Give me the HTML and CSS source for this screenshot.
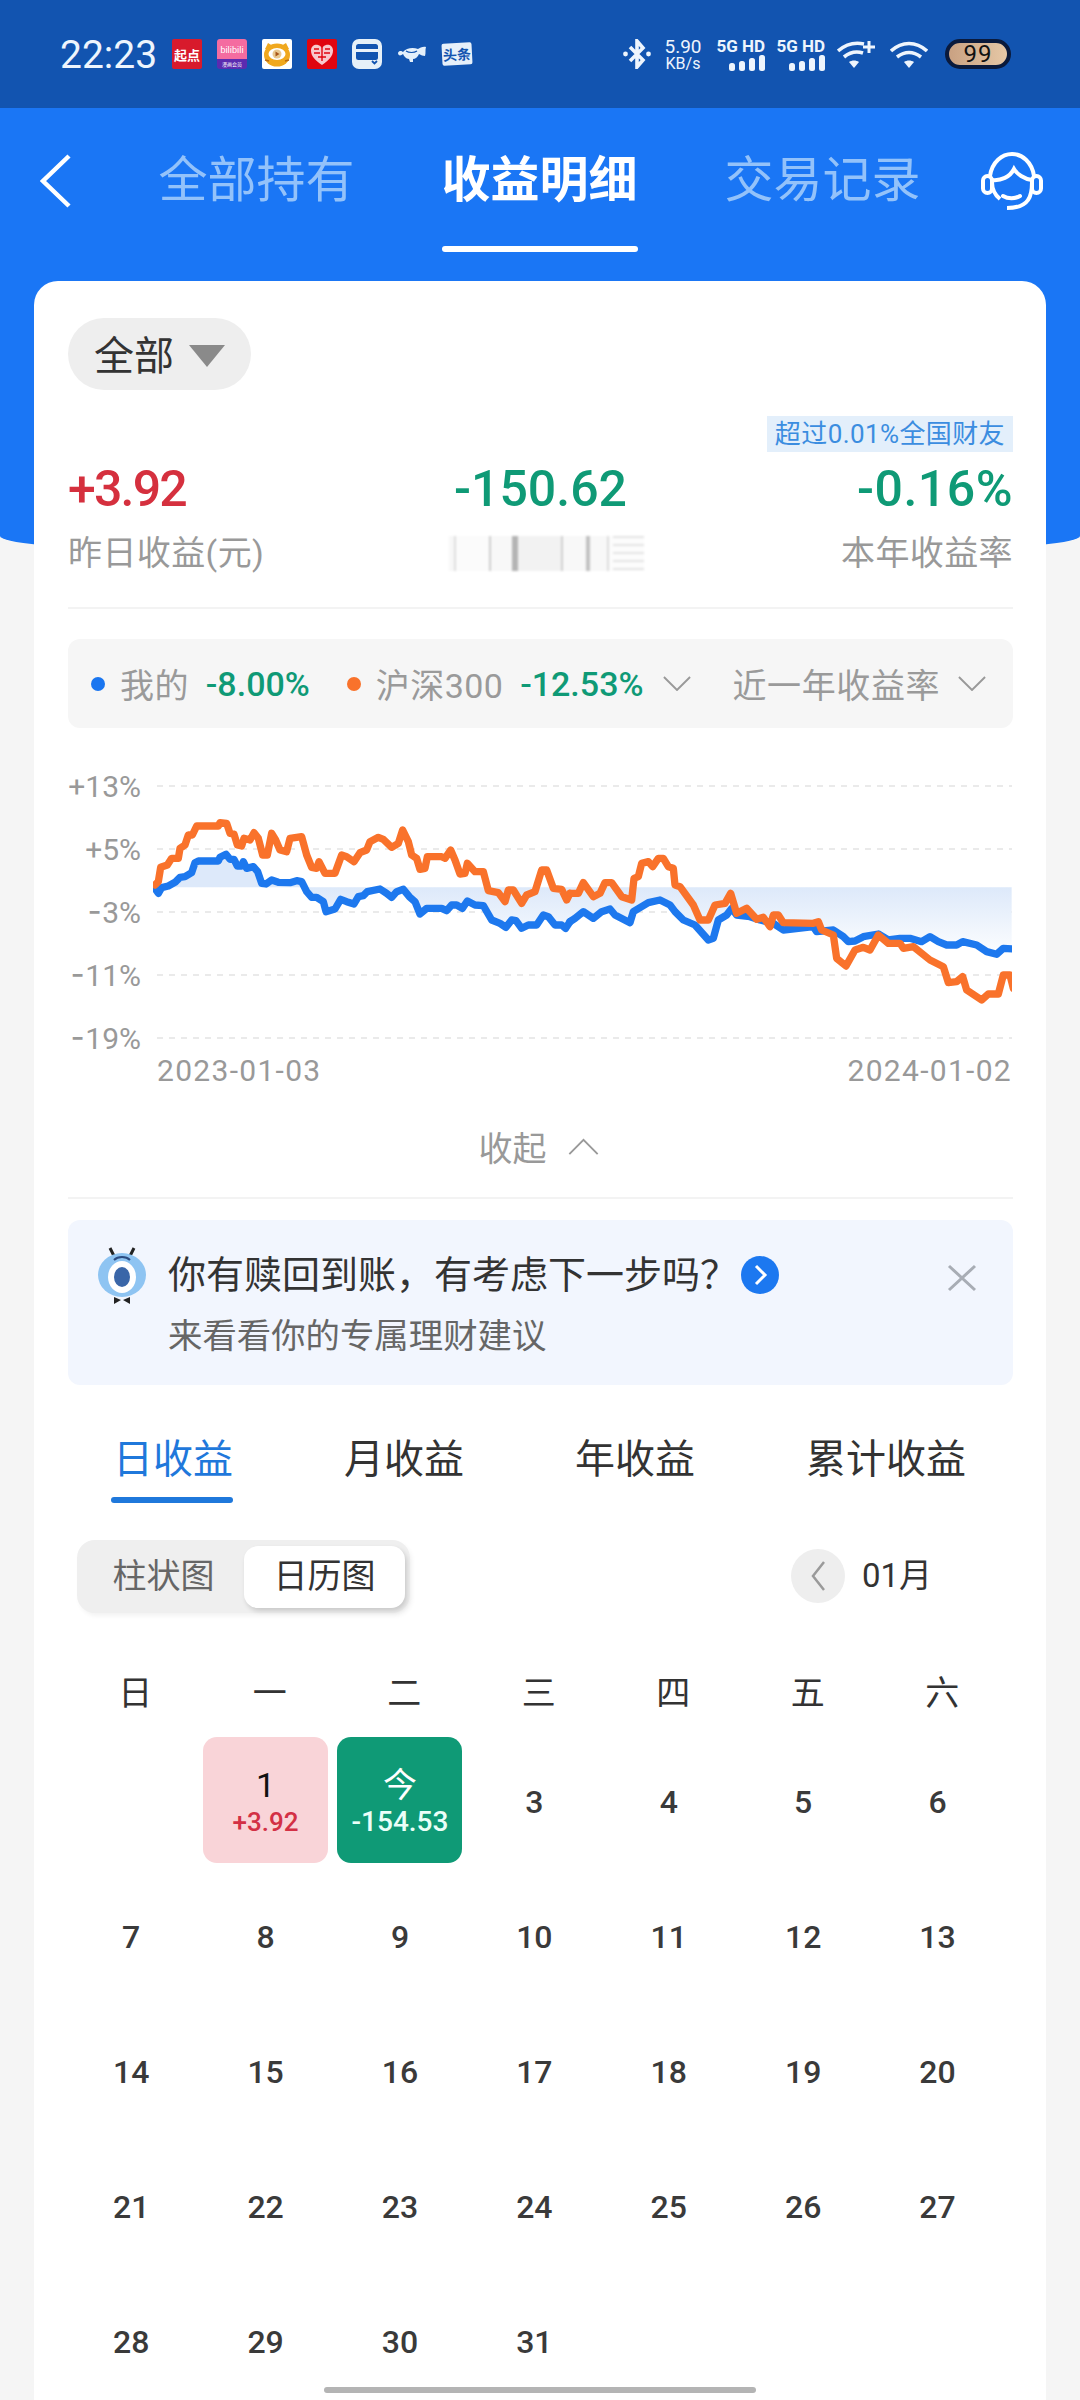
FILE: index.html
```html
<!DOCTYPE html>
<html lang="zh-CN">
<head>
<meta charset="utf-8">
<title>收益明细</title>
<link rel="stylesheet" href="styles.css">
</head>
<body>
<div class="page">
  <div class="hero-bg"></div>

  <div class="status">
    <span class="time">22:23</span>
    <div class="apps">
      <span class="app app-qd">起点</span>
      <span class="app app-bili"><b>bilibili</b><i>漫画会员</i></span>
      <span class="app app-tiger"><svg viewBox="0 0 30 30"><path d="M3 10l3-6 5 3h8l5-3 3 6z" fill="#f0a81e"/><ellipse cx="15" cy="16" rx="13" ry="11.500" fill="#f0a81e"/><ellipse cx="15" cy="15" rx="8.500" ry="6" fill="#fff"/><circle cx="15" cy="15" r="4.500" fill="#e8c890"/><path d="M13.500 12.500l4 2.500-4 2.500z" fill="#a8561a"/><path d="M3 21l4 1M27 21l-4 1" stroke="#b86a14" stroke-width="1.500"/></svg></span>
      <span class="app app-heart"><svg viewBox="0 0 30 30"><path d="M15 26C8 21 4 17 4 11.500C4 7 8 5 11 6c2 .6 3 1.500 4 3 1-1.500 2-2.400 4-3 3-1 7 1 7 5.500C26 17 22 21 15 26z" fill="#f8c8cc"/><path d="M7 10h5M7 14h6M18 10h5M17 14h6M11 18h8M15 8v14" stroke="#e0050f" stroke-width="1.400"/></svg></span>
      <span class="app app-card"><svg viewBox="0 0 30 30"><rect x="4" y="5" width="22" height="16" rx="2.500" fill="#1254b0"/><rect x="4" y="10" width="22" height="3" fill="#eaf2fa"/><path d="M20 22l2.500 2.500L25 22" fill="none" stroke="#1254b0" stroke-width="1.800"/></svg></span>
      <span class="app app-plain"><svg viewBox="0 0 30 30"><path d="M1 14c1-3 4-2 5-1 3-4 10-5 15-3 2-1 5-3 8-2-1 3 0 6-1 9-2 0-4-1-6-2-1 3-4 5-6 5l0 3h-3l-1-3c-3 0-5-3-6-5-2 2-5 2-5-1z" fill="#e4f0fb"/><path d="M9 12c3 2 8 2 11 0" stroke="#1254b0" stroke-width="1.200" fill="none"/></svg></span>
      <span class="app app-tt">头条</span>
    </div>
    <div class="sys">
      <svg class="i-bt" viewBox="0 0 28 30"><path d="M7 8l13 13-6 7V2l6 7L7 22" fill="none" stroke="#eef5fd" stroke-width="3.600"/><circle cx="2.500" cy="15" r="2.400" fill="#eef5fd"/><circle cx="25.500" cy="15" r="2.400" fill="#eef5fd"/></svg>
      <div class="speed"><span class="sp1">5.90</span><span class="sp2">KB/s</span></div>
      <div class="sig"><span class="sig-t">5G HD</span><svg viewBox="0 0 36 16"><rect x="0" y="8" width="6" height="8" rx="2.500"/><rect x="10" y="6" width="6" height="10" rx="2.500"/><rect x="20" y="3" width="6" height="13" rx="2.500"/><rect x="30" y="0" width="6" height="16" rx="2.500"/></svg></div>
      <div class="sig sig2"><span class="sig-t">5G HD</span><svg viewBox="0 0 36 16"><rect x="0" y="8" width="6" height="8" rx="2.500"/><rect x="10" y="6" width="6" height="10" rx="2.500"/><rect x="20" y="3" width="6" height="13" rx="2.500"/><rect x="30" y="0" width="6" height="16" rx="2.500"/></svg></div>
      <svg class="i-wifi1" viewBox="0 0 38 30"><g fill="none" stroke="#eef5fd" stroke-width="3.600"><path d="M1 12c8-7 17-9 26-7"/><path d="M7 18c6-5 13-6 19-4"/></g><path d="M12 23c3-2 7-2 10 0l-5 6z" fill="#eef5fd"/><path d="M26 8h12M32 2v12" stroke="#eef5fd" stroke-width="3"/></svg>
      <svg class="i-wifi2" viewBox="0 0 38 30"><g fill="none" stroke="#eef5fd" stroke-width="3.600"><path d="M1 12c11-10 25-10 36 0"/><path d="M7 18c8-6 16-6 24 0"/></g><path d="M14 23c3-2 7-2 10 0l-5 6z" fill="#eef5fd"/></svg>
      <div class="battery"><span>99</span></div>
    </div>
  </div>

  <div class="nav">
    <svg class="back" viewBox="0 0 32 54"><path d="M29 2L3 27l26 25" fill="none" stroke="#fff" stroke-width="4.500"/></svg>
    <div class="nav-tabs">
      <span class="nav-tab">全部持有</span>
      <span class="nav-tab nav-on">收益明细</span>
      <span class="nav-tab">交易记录</span>
    </div>
    <svg class="headset" viewBox="0 0 62 58"><g fill="none" stroke="#fff" stroke-width="4"><path d="M9 24C11 10 21 2 31 2s20 8 22 22"/><path d="M11 28c9 1 18-3 22-11 3 5 10 10 18 11"/><rect x="2" y="24" width="9" height="17" rx="4.500"/><rect x="51" y="24" width="9" height="17" rx="4.500"/><path d="M11 30c0 8 3 13 8 17"/><path d="M51 30c0 8-1 14-4 18-4 6-12 8-21 8"/><path d="M22 44c5 3 12 3 17 0" stroke-linecap="round"/></g></svg>
  </div>

  <div class="card">
    <div class="pill"><span>全部</span><i class="tri"></i></div>
    <div class="rank-row"><span class="rank">超过0.01%全国财友</span></div>
    <div class="nums">
      <span class="num up">+3.92</span>
      <span class="num down mid">-150.62</span>
      <span class="num down end">-0.16%</span>
    </div>
    <div class="labels">
      <span class="lab">昨日收益(元)</span>
      <span class="blur"></span>
      <span class="lab end">本年收益率</span>
    </div>
    <div class="rule r1"></div>

    <div class="legend">
      <i class="dot d-blue"></i><span class="lg-name">我的</span><span class="lg-val">-8.00%</span>
      <i class="dot d-orange"></i><span class="lg-name">沪深300</span><span class="lg-val">-12.53%</span>
      <svg class="chev c1" viewBox="0 0 30 16"><path d="M1 1l14 14L29 1" fill="none" stroke="#999" stroke-width="2"/></svg>
      <span class="lg-name lg-range">近一年收益率</span>
      <svg class="chev c2" viewBox="0 0 30 16"><path d="M1 1l14 14L29 1" fill="none" stroke="#999" stroke-width="2"/></svg>
    </div>

    <svg class="chart" viewBox="68 760 945 330">
      <defs>
        <linearGradient id="fade" gradientUnits="userSpaceOnUse" x1="0" y1="382" x2="0" y2="600">
          <stop offset="0" stop-color="#dde9fa"/>
          <stop offset="1" stop-color="#ffffff"/>
        </linearGradient>
        <clipPath id="plot"><rect x="153" y="770" width="859" height="280"/></clipPath>
      </defs>
      <g class="grid">
        <line x1="157" x2="1012" y1="786" y2="786"/>
        <line x1="157" x2="1012" y1="849" y2="849"/>
        <line x1="157" x2="1012" y1="912" y2="912"/>
        <line x1="157" x2="1012" y1="975" y2="975"/>
        <line x1="157" x2="1012" y1="1038" y2="1038"/>
      </g>
      <g class="axis">
        <text x="141" y="797">+13%</text>
        <text x="141" y="860">+5%</text>
        <text x="141" y="923"><tspan class="neg">-</tspan>3%</text>
        <text x="141" y="986"><tspan class="neg">-</tspan>11%</text>
        <text x="141" y="1049"><tspan class="neg">-</tspan>19%</text>
      </g>
      <g clip-path="url(#plot)">
        <g transform="translate(130 760) scale(.33333)">
          <polygon fill="url(#fade)" points="75,382 95,383 115,378 135,367 150,352 165,350 185,338 195,308 205,303 265,303 270,292 288,283 300,298 312,298 322,318 335,318 340,305 350,325 370,320 383,335 395,370 408,372 425,360 445,367 480,368 500,362 515,365 530,395 545,412 560,412 580,425 588,455 615,447 632,418 650,425 672,432 685,410 700,407 712,395 750,387 770,400 785,412 800,395 820,388 838,410 855,425 870,462 890,445 935,445 950,452 965,435 980,435 997,445 1012,423 1035,435 1060,437 1085,480 1110,490 1128,502 1145,480 1158,482 1175,505 1195,495 1220,495 1240,465 1255,470 1275,495 1295,495 1307,505 1320,485 1320,382"/>
        </g>
        <g transform="translate(560 760) scale(.33333)">
          <polygon fill="url(#fade)" points="30,382 30,485 45,475 70,455 100,475 125,455 150,447 165,465 210,488 220,455 265,428 300,420 330,435 345,455 370,480 405,495 445,540 460,535 475,480 500,465 515,445 530,465 570,470 600,480 640,490 670,510 760,500 770,515 820,510 850,530 865,545 885,543 910,530 955,522 985,540 1020,535 1050,535 1085,545 1110,530 1135,545 1160,555 1190,555 1208,545 1250,555 1280,575 1310,583 1330,565 1355,567 1355,382"/>
        </g>
        <g transform="translate(130 760) scale(.33333)">
          <polyline class="ln-blue" points="75,385 85,400 95,383 115,378 135,367 150,352 165,350 185,338 195,308 205,303 265,303 270,292 288,283 300,298 312,298 322,318 335,318 340,305 350,325 370,320 383,335 395,370 408,372 425,360 445,367 480,368 500,362 515,365 530,395 545,412 560,412 580,425 588,455 615,447 632,418 650,425 672,432 685,410 700,407 712,395 750,387 770,400 785,412 800,395 820,388 838,410 855,425 870,462 890,445 935,445 950,452 965,435 980,435 997,445 1012,423 1035,435 1060,437 1085,480 1110,490 1128,502 1145,480 1158,482 1175,505 1195,495 1220,495 1240,465 1255,470 1275,495 1295,495 1307,505 1320,485"/>
        </g>
        <g transform="translate(560 760) scale(.33333)">
          <polyline class="ln-blue" points="30,485 45,475 70,455 100,475 125,455 150,447 165,465 210,488 220,455 265,428 300,420 330,435 345,455 370,480 405,495 445,540 460,535 475,480 500,465 515,445 530,465 570,470 600,480 640,490 670,510 760,500 770,515 820,510 850,530 865,545 885,543 910,530 955,522 985,540 1020,535 1050,535 1085,545 1110,530 1135,545 1160,555 1190,555 1208,545 1250,555 1280,575 1310,583 1330,565 1365,567"/>
        </g>
        <g transform="translate(130 760) scale(.33333)">
          <polyline class="ln-orange" points="75,375 85,365 92,322 112,315 125,295 145,295 150,265 165,255 175,225 187,225 200,198 265,198 270,188 290,190 300,220 312,222 322,255 335,258 342,235 360,240 372,218 385,235 398,285 412,285 425,220 437,240 450,270 470,275 480,235 515,230 530,285 545,322 560,325 567,305 585,340 615,340 635,285 650,290 672,305 690,278 710,270 720,245 745,232 760,238 785,262 805,250 818,210 835,245 845,285 860,295 870,328 885,325 892,290 935,290 945,295 962,270 975,300 990,342 1005,340 1012,310 1035,335 1060,335 1075,392 1105,398 1125,425 1135,390 1150,390 1175,430 1190,405 1215,395 1235,330 1250,330 1270,385 1295,388 1310,420 1320,400"/>
        </g>
        <g transform="translate(560 760) scale(.33333)">
          <polyline class="ln-orange" points="30,400 55,400 70,368 100,410 120,400 135,368 155,368 185,410 215,420 222,355 235,350 245,310 265,305 278,320 295,295 310,295 325,320 340,325 345,375 360,380 400,435 420,480 445,480 465,435 495,430 512,400 530,460 560,445 590,478 610,472 630,500 640,465 655,465 670,488 760,490 775,485 785,510 820,525 830,595 858,618 885,570 910,562 930,570 955,525 985,550 1020,550 1030,565 1060,560 1110,600 1150,620 1165,668 1190,665 1208,650 1220,690 1265,720 1285,702 1315,702 1330,645 1350,645 1360,685"/>
        </g>
      </g>
      <g class="dates">
        <text x="157" y="1081">2023-01-03</text>
        <text class="date-end" x="1012" y="1081">2024-01-02</text>
      </g>
    </svg>

    <div class="collapse"><span>收起</span><svg viewBox="0 0 32 18"><path d="M1 17L16 2l15 15" fill="none" stroke="#999" stroke-width="2"/></svg></div>

    <div class="banner">
      <svg class="mascot" viewBox="0 0 50 58"><path d="M17 9L13 1M33 9l4-8" stroke="#222" stroke-width="3"/><ellipse cx="25" cy="28" rx="24" ry="22" fill="#8ec4f2"/><ellipse cx="25" cy="30" rx="14" ry="16" fill="#fff"/><ellipse cx="25" cy="30" rx="8" ry="10" fill="#3a66a8"/><path d="M17 13c4-4 12-4 16 0" stroke="#2a4a80" stroke-width="2" fill="none"/><path d="M17 50l7 3-7 4zM33 50l-7 3 7 4z" fill="#222"/></svg>
      <div class="banner-text">
        <div class="b-line1"><span>你有赎回到账，有考虑下一步吗？</span><svg class="go" viewBox="0 0 38 38"><circle cx="19" cy="19" r="19" fill="#1c78f0"/><path d="M15 10l9 9-9 9" fill="none" stroke="#fff" stroke-width="3"/></svg></div>
        <div class="b-line2">来看看你的专属理财建议</div>
      </div>
      <svg class="close" viewBox="0 0 30 28"><path d="M2 2l26 24M28 2L2 26" stroke="#a8adb5" stroke-width="3" fill="none"/></svg>
    </div>

    <div class="tabs">
      <span class="tab tab-on">日收益</span>
      <span class="tab">月收益</span>
      <span class="tab">年收益</span>
      <span class="tab">累计收益</span>
    </div>

    <div class="tools">
      <div class="toggle">
        <span class="tg">柱状图</span>
        <span class="tg tg-on">日历图</span>
      </div>
      <div class="month">
        <span class="m-prev"><svg viewBox="0 0 16 32"><path d="M14 2L3 16l11 14" fill="none" stroke="#9a9a9a" stroke-width="2.500"/></svg></span>
        <span>01月</span>
      </div>
    </div>

    <div class="week">
      <span>日</span><span>一</span><span>二</span><span>三</span><span>四</span><span>五</span><span>六</span>
    </div>

    <div class="days">
      <span class="day"></span>
      <span class="day day-up"><b>1</b><em>+3.92</em></span>
      <span class="day day-today"><b>今</b><em>-154.53</em></span>
      <span class="day">3</span><span class="day">4</span><span class="day">5</span><span class="day">6</span>
      <span class="day">7</span><span class="day">8</span><span class="day">9</span><span class="day">10</span><span class="day">11</span><span class="day">12</span><span class="day">13</span>
      <span class="day">14</span><span class="day">15</span><span class="day">16</span><span class="day">17</span><span class="day">18</span><span class="day">19</span><span class="day">20</span>
      <span class="day">21</span><span class="day">22</span><span class="day">23</span><span class="day">24</span><span class="day">25</span><span class="day">26</span><span class="day">27</span>
      <span class="day">28</span><span class="day">29</span><span class="day">30</span><span class="day">31</span>
    </div>
  </div>

  <div class="home-bar"></div>
</div>
</body>
</html>
```
FILE: styles.css
```css
* { box-sizing: border-box; }
html, body { margin: 0; padding: 0; }
body {
  font-family: Roboto, "Noto Sans CJK SC", sans-serif;
  background: #f5f5f5;
}
.page {
  position: relative;
  width: 1080px;
  height: 2400px;
  overflow: hidden;
  background: #f5f5f5;
}
.hero-bg {
  position: absolute;
  left: 0;
  top: 108px;
  width: 1080px;
  height: 452px;
  background: #1a76f5;
  border-radius: 0 0 540px 540px / 0 0 24px 24px;
}

/* status bar */
.status {
  position: relative;
  height: 108px;
  background: #1254b0;
  display: flex;
  align-items: center;
  padding: 0 68px 0 60px;
  color: #eef5fd;
}
.time { font-size: 39px; width: 112px; line-height: 44px; margin-top: 2px; white-space: nowrap; }
.apps { display: flex; gap: 15px; }
.app {
  width: 30px;
  height: 30px;
  display: flex;
  align-items: center;
  justify-content: center;
  overflow: hidden;
  border-radius: 2px;
}
.app svg { width: 30px; height: 30px; display: block; }
.app-qd { background: #d81a2c; color: #fff; font-size: 13px; font-weight: 700; white-space: nowrap; }
.app-bili {
  flex-direction: column;
  background: linear-gradient(#f46ca0 0 68%, #5b2bb0 68%);
  color: #fff;
  border-radius: 3px;
}
.app-bili b { font-size: 9px; line-height: 20px; font-weight: 400; }
.app-bili i { font-size: 5px; line-height: 8px; font-style: normal; white-space: nowrap; }
.app-tiger { background: #fff; }
.app-heart { background: #e0050f; }
.app-card { background: #e6f0f8; border-radius: 7px; }
.app-tt {
  height: 22px;
  width: 30px;
  margin-top: 4px;
  background: #e6f0fa;
  color: #1254b0;
  font-size: 14px;
  font-weight: 700;
  white-space: nowrap;
  transform: rotate(-3deg);
}
.sys { display: flex; align-items: center; margin-left: 151px; }
.i-bt { width: 28px; height: 30px; }
.speed {
  display: flex;
  flex-direction: column;
  align-items: center;
  margin-left: 12px;
  width: 40px;
}
.sp1 { font-size: 19px; line-height: 19px; }
.sp2 { font-size: 16px; line-height: 15px; }
.sig {
  display: flex;
  flex-direction: column;
  align-items: flex-end;
  width: 49px;
  margin-left: 13px;
}
.sig2 { margin-left: 11px; }
.sig-t { font-size: 17px; font-weight: 700; line-height: 17px; white-space: nowrap; }
.sig svg { width: 36px; height: 16px; fill: #eef5fd; margin-top: 0; }
.i-wifi1 { width: 38px; height: 30px; margin-left: 12px; }
.i-wifi2 { width: 38px; height: 30px; margin-left: 15px; }
.battery {
  width: 66px;
  height: 30px;
  margin-left: 17px;
  border: 4px solid #0a1a3c;
  border-radius: 15px;
  background: linear-gradient(90deg, #c9a182, #e6c8a6);
  color: #111;
  font-size: 24px;
  line-height: 22px;
  text-align: center;
  letter-spacing: 1px;
}

/* nav */
.nav {
  position: relative;
  height: 173px;
  display: flex;
  padding: 43px 0 0 40px;
  align-items: flex-start;
}
.back { width: 32px; height: 54px; margin: 3px 86.500px 0 0; flex: none; }
.nav-tabs { display: flex; gap: 87px; }
.nav-tab {
  position: relative;
  font-size: 49px;
  line-height: 60px;
  color: #93c2fa;
  white-space: nowrap;
}
.nav-on { color: #fff; font-weight: 700; }
.nav-on::after {
  content: "";
  position: absolute;
  left: 0;
  right: 0;
  top: 95px;
  height: 6px;
  border-radius: 3px;
  background: #fff;
}
.headset { width: 62px; height: 58px; margin: 1px 0 0 60.500px; flex: none; }

/* card */
.card {
  position: relative;
  margin: 0 34px;
  height: 2200px;
  padding: 37px 33px 0 34px;
  background: #fff;
  border-radius: 24px;
}
.pill {
  width: 183px;
  height: 72px;
  border-radius: 36px;
  background: #eee;
  display: flex;
  align-items: center;
  padding: 0 0 3px 26px;
  font-size: 40px;
  color: #333;
}
.tri {
  width: 0;
  height: 0;
  margin: 7px 0 0 15px;
  border-left: 18px solid transparent;
  border-right: 18px solid transparent;
  border-top: 22px solid #8a8a8a;
}
.rank-row { display: flex; justify-content: flex-end; margin-top: 26px; }
.rank {
  height: 36px;
  padding: 0 8px;
  background: #e3effb;
  color: #3b8de0;
  font-size: 26px;
  letter-spacing: .4px;
  line-height: 36px;
  white-space: nowrap;
}
.nums, .labels { display: grid; grid-template-columns: 1fr 1fr 1fr; }
.nums { margin-top: 9px; }
.num { font-size: 50px; line-height: 56px; font-weight: 500; white-space: nowrap; }
.up { color: #d5303e; letter-spacing: -1.800px; }
.down { color: #0f9a76; }
.mid { text-align: center; }
.end { text-align: right; letter-spacing: .5px; }
.labels { margin-top: 14px; align-items: center; }
.lab { font-size: 34px; line-height: 44px; color: #999; white-space: nowrap; letter-spacing: .4px; }
.blur {
  display: block;
  width: 207px;
  height: 35px;
  margin: 0 auto;
  filter: blur(1px);
  background:
    repeating-linear-gradient(180deg, #e4e4e4 0 2px, transparent 2px 8px) right / 31px 100% no-repeat,
    linear-gradient(90deg,
      #fff 0 6%, #f7f7f7 6% 8%, #dedede 8% 9%, #fbfbfb 9% 25%, #cfcfcf 25% 26%, #f8f8f8 26% 36%,
      #b4b4b4 36% 39%, #f2f2f2 39% 60%, #d0d0d0 60% 61%, #f8f8f8 61% 72%, #c2c2c2 72% 74%, #f8f8f8 74% 82%, #dcdcdc 82% 83%, #fcfcfc 83% 100%);
}
.rule { height: 2px; background: #f3f3f3; }
.r1 { margin-top: 32px; }

/* legend */
.legend {
  display: flex;
  align-items: center;
  height: 89px;
  margin-top: 30px;
  padding-left: 23px;
  background: #f6f6f6;
  border-radius: 12px;
  font-size: 34px;
  white-space: nowrap;
}
.dot { width: 14px; height: 14px; border-radius: 50%; flex: none; }
.d-blue { background: #1a76f0; }
.d-orange { background: #f9722b; margin-left: 37px; }
.lg-name { color: #9a9a9a; margin-left: 15px; letter-spacing: .4px; }
.lg-val { color: #0f9a76; font-weight: 500; margin-left: 17px; }
.chev { width: 28px; height: 15px; flex: none; }
.c1 { margin-left: 19px; }
.lg-range { margin-left: 42px; letter-spacing: .6px; }
.c2 { margin-left: 18px; }

/* chart */
.chart { display: block; width: 945px; height: 330px; margin-top: 32px; }
.grid line { stroke: #e4e4e4; stroke-width: 1.500; stroke-dasharray: 6 6; }
.axis text { font-size: 30px; fill: #999; text-anchor: end; }
.axis .neg { font-family: "Noto Sans CJK SC", sans-serif; font-size: 38px; letter-spacing: 1px; }
.dates text { font-size: 30px; fill: #999; letter-spacing: 1.300px; }
.dates .date-end { text-anchor: end; }
.ln-blue, .ln-orange { fill: none; stroke-width: 22; stroke-linejoin: round; stroke-linecap: round; }
.ln-blue { stroke: #1d78ee; }
.ln-orange { stroke: #f9722b; }

/* collapse */
.collapse {
  height: 109px;
  padding: 6px 4px 0 0;
  display: flex;
  align-items: center;
  justify-content: center;
  gap: 21px;
  border-bottom: 2px solid #f3f3f3;
  font-size: 34px;
  color: #999;
}
.collapse svg { width: 31px; height: 17px; }

/* banner */
.banner {
  position: relative;
  display: flex;
  height: 165px;
  margin-top: 21px;
  padding: 27px 0 0 29px;
  background: #f2f6fe;
  border-radius: 12px;
}
.mascot { width: 50px; height: 58px; flex: none; }
.banner-text { margin-left: 21px; }
.b-line1 {
  display: flex;
  align-items: center;
  font-size: 38px;
  line-height: 50px;
  color: #333;
  white-space: nowrap;
  margin-top: 3px;
}
.go { width: 38px; height: 38px; margin-left: 3px; }
.b-line2 { font-size: 34.400px; line-height: 46px; margin-top: 13px; color: #666; white-space: nowrap; }
.close { position: absolute; left: 879px; top: 44px; width: 30px; height: 28px; }

/* tabs */
.tabs {
  display: flex;
  gap: 111px;
  height: 60px;
  margin-top: 45px;
  padding-left: 45px;
}
.tab { position: relative; font-size: 40px; line-height: 60px; color: #333; white-space: nowrap; }
.tab-on { color: #1f78db; }
.tab-on::after {
  content: "";
  position: absolute;
  left: -2px;
  right: 0;
  top: 67px;
  height: 6px;
  border-radius: 3px;
  background: #1f78db;
}

/* tools */
.tools {
  display: flex;
  align-items: center;
  height: 73px;
  margin-top: 50px;
  padding-left: 9px;
}
.toggle {
  display: flex;
  align-items: center;
  width: 333px;
  height: 73px;
  padding-left: 6px;
  background: #efefef;
  border-radius: 18px;
  box-shadow: 2px 3px 4px rgba(0, 0, 0, .05);
}
.tg { width: 161px; height: 62px; line-height: 60px; text-align: center; font-size: 34px; color: #666; }
.tg-on {
  background: #fff;
  color: #333;
  border-radius: 14px;
  box-shadow: 2px 3px 5px rgba(0, 0, 0, .16);
}
.month {
  display: flex;
  align-items: center;
  gap: 17px;
  margin-left: 381px;
  font-size: 33px;
  color: #333;
  line-height: 44px;
  padding-bottom: 2px;
}
.m-prev {
  display: flex;
  align-items: center;
  justify-content: center;
  width: 54px;
  height: 54px;
  border-radius: 50%;
  background: #eee;
}
.m-prev svg { width: 16px; height: 32px; }

/* calendar */
.week {
  display: grid;
  grid-template-columns: repeat(7, 134.500px);
  height: 50px;
  margin-top: 55px;
  font-size: 34px;
  line-height: 50px;
  text-align: center;
  color: #333;
}
.days {
  display: grid;
  grid-template-columns: repeat(7, 134.400px);
  grid-auto-rows: 126px;
  row-gap: 9px;
  margin: 19px 0 0 -4px;
}
.day {
  display: flex;
  flex-direction: column;
  align-items: center;
  justify-content: center;
  width: 125px;
  padding-top: 4px;
  justify-self: center;
  border-radius: 14px;
  font-size: 32px;
  font-weight: 500;
  color: #3a3a3a;
}
.day b { font-size: 34px; font-weight: 400; line-height: 40px; margin-top: -8px; }
.day em { font-style: normal; font-weight: 500; line-height: 34px; }
.day-up, .day-today { padding-top: 12px; }
.day-up { background: #f9d4d8; }
.day-up b { color: #111; }
.day-up em { font-size: 26px; color: #d33045; }
.day-today { background: #0f9a76; }
.day-today b { color: #fff; }
.day-today em { font-size: 28px; color: #eafff8; }

.home-bar {
  position: absolute;
  left: 324px;
  top: 2387px;
  width: 432px;
  height: 6px;
  border-radius: 3px;
  background: #b4b4b4;
}
```
